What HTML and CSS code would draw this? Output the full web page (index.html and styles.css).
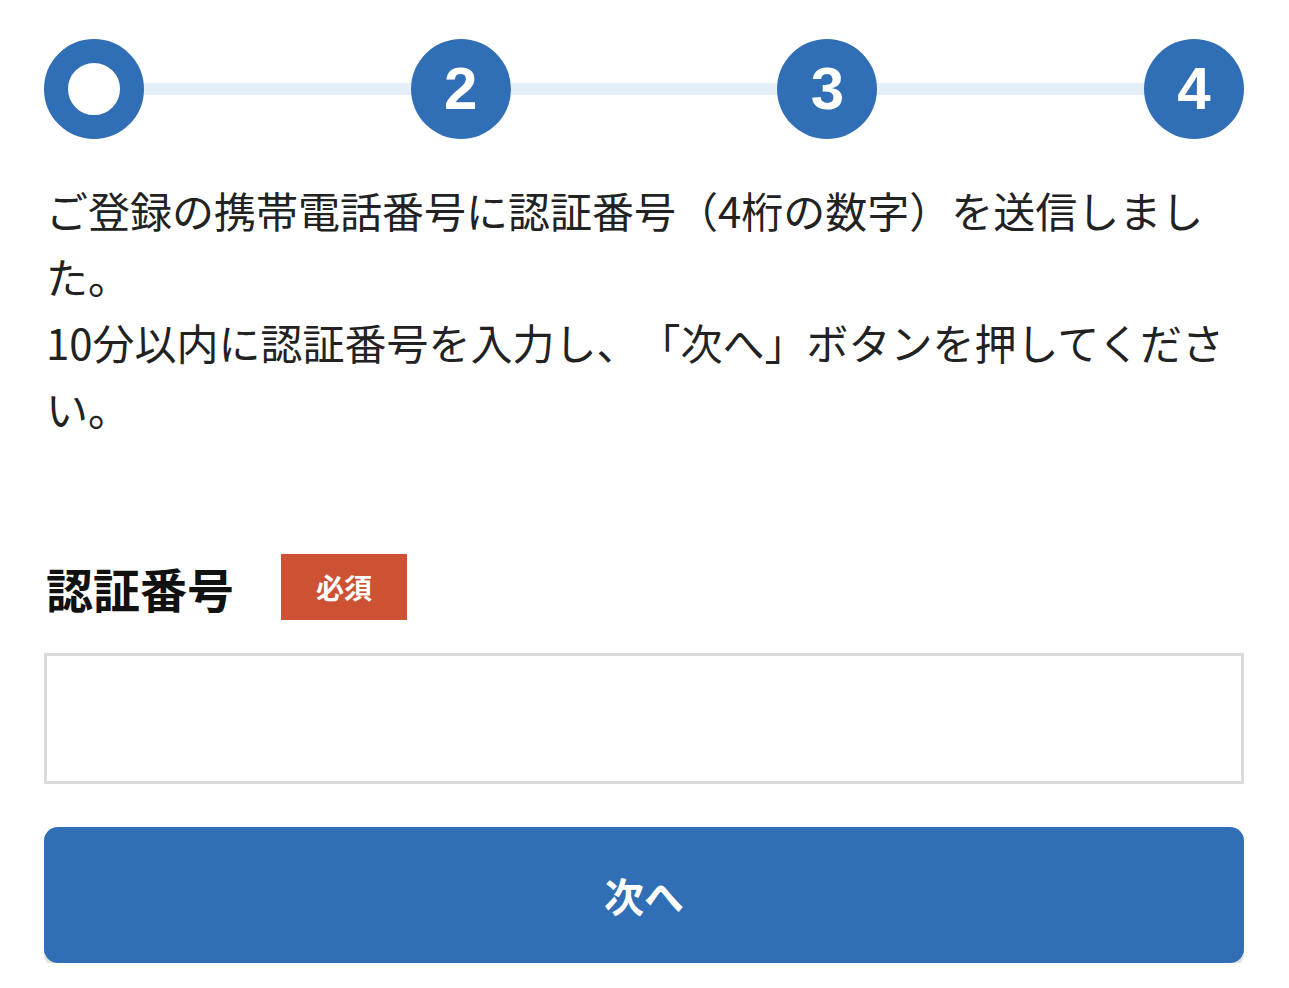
FILE: index.html
```html
<!DOCTYPE html>
<html lang="ja">
<head>
<meta charset="utf-8">
<link rel="stylesheet" href="styles.css">
</head>
<body>
<div class="page">
  <div class="stepper">
    <div class="step step-current"></div>
    <div class="connector"></div>
    <div class="step">2</div>
    <div class="connector"></div>
    <div class="step">3</div>
    <div class="connector"></div>
    <div class="step">4</div>
  </div>
  <p class="message">ご登録の携帯電話番号に認証番号（4桁の数字）を送信しました。<br>10分以内に認証番号を入力し、「次へ」ボタンを押してください。</p>
  <div class="field-label-row">
    <span class="field-label">認証番号</span>
    <span class="badge">必須</span>
  </div>
  <input class="code-input" type="text" inputmode="numeric">
  <button class="next-btn" type="button">次へ</button>
</div>
</body>
</html>
```
FILE: styles.css
```css
html, body {
  margin: 0;
  padding: 0;
  background: #ffffff;
}
body {
  font-family: "Noto Sans CJK JP", "Noto Sans", sans-serif;
  color: #222222;
}
.page {
  padding: 39px 45px 0 44px;
}
.stepper {
  display: flex;
  align-items: center;
}
.step {
  width: 100px;
  height: 100px;
  border-radius: 50%;
  background: #306eb6;
  color: #ffffff;
  display: flex;
  align-items: center;
  justify-content: center;
  font-family: "Liberation Sans", Arial, sans-serif;
  font-weight: bold;
  font-size: 60px;
  line-height: 1;
  flex: none;
  box-sizing: border-box;
}
.step-current {
  background: #ffffff;
  border: 24px solid #306eb6;
}
.connector {
  flex: 1;
  height: 12px;
  background: #e6eef8;
}
.message {
  margin: 38px 0 0 2px;
  font-size: 42px;
  line-height: 66px;
  letter-spacing: 0;
  text-spacing-trim: space-all;
}
.field-label-row {
  display: flex;
  align-items: center;
  margin-top: 113px;
  height: 66px;
}
.field-label {
  font-size: 47px;
  font-weight: bold;
  color: #111111;
  margin-left: 2px;
}
.badge {
  margin-left: 47px;
  width: 126px;
  height: 66px;
  background: #cc5233;
  color: #ffffff;
  font-size: 28px;
  font-weight: bold;
  display: flex;
  align-items: center;
  justify-content: center;
}
.code-input {
  display: block;
  box-sizing: border-box;
  width: 100%;
  height: 131px;
  margin-top: 33px;
  border: 3px solid #dcdcdc;
  border-radius: 0;
  background: #ffffff;
  font-size: 42px;
  padding: 0 20px;
  outline: none;
}
.next-btn {
  display: block;
  width: 100%;
  height: 136px;
  margin-top: 43px;
  border: none;
  border-radius: 14px;
  background: #306eb6;
  color: #ffffff;
  font-family: "Noto Sans CJK JP", "Noto Sans", sans-serif;
  font-size: 40px;
  font-weight: bold;
  box-shadow: 0 5px 0 #e2e2e2;
  cursor: pointer;
}
```
